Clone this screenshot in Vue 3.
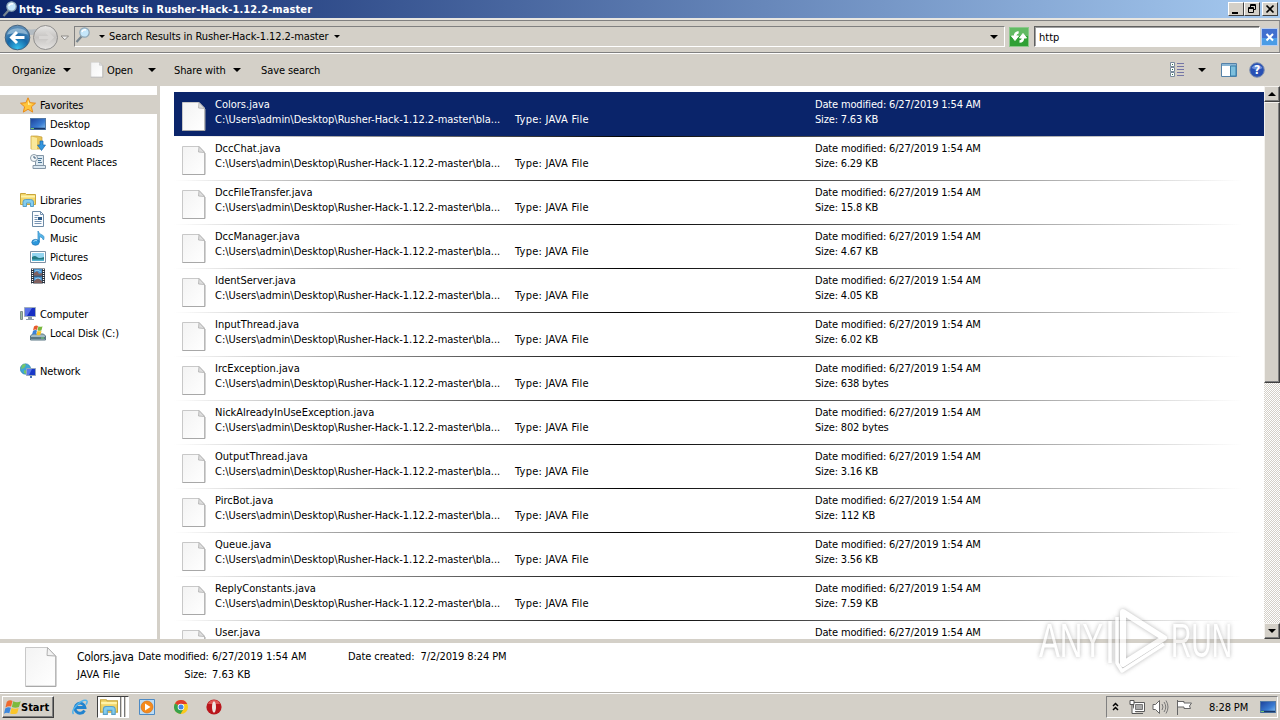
<template>
  <div class="screen">
    <svg class="sprite" width="0" height="0">
      <defs>
        <linearGradient id="paper" x1="0" y1="0" x2="1" y2="1">
          <stop offset="0" stop-color="#f3f3f3" />
          <stop offset="1" stop-color="#fff" />
        </linearGradient>
        <linearGradient id="blueScreen" x1="0" y1="0" x2="1" y2="1">
          <stop offset="0" stop-color="#1c4099" />
          <stop offset="0.6" stop-color="#3a7cd2" />
          <stop offset="1" stop-color="#8cc4f0" />
        </linearGradient>
        <radialGradient id="backBall" cx="0.5" cy="0.95" r="0.9">
          <stop offset="0" stop-color="#35c0ee" />
          <stop offset="0.5" stop-color="#1668a8" />
          <stop offset="1" stop-color="#5f8fb8" />
        </radialGradient>
        <linearGradient id="greyBall" x1="0" y1="0" x2="0" y2="1">
          <stop offset="0" stop-color="#e8e7e5" />
          <stop offset="0.5" stop-color="#c6c4c2" />
          <stop offset="1" stop-color="#e6e4e2" />
        </linearGradient>
      </defs>
      <symbol id="i-file" viewBox="0 0 24 30">
        <path d="M.5 .5H17l5.500 5.500v22.500H.5z" fill="url(#paper)" stroke="#c8c8c8" />
        <path d="M17 .5l-.5 5.500 6 .5z" fill="#dedede" stroke="#b0b0b0" stroke-width=".8" />
        <path d="M.5 28.500h22.500V7" fill="none" stroke="#a8a8a8" />
      </symbol>
      <symbol id="i-search" viewBox="0 0 16 16">
        <path d="M6.500 9.500L1.500 15" stroke="#77858f" stroke-width="2.200" />
        <circle cx="9.500" cy="5.500" r="4.700" fill="#c5e6fa" stroke="#8da5b5" stroke-width="1.200" />
        <path d="M7 5a3 3 0 0 1 4-2" stroke="#fff" stroke-width="1.500" fill="none" />
      </symbol>
      <symbol id="i-star" viewBox="0 0 16 16">
        <path d="M8 .8l2.100 4.900 5.400.5-4.100 3.600 1.300 5.300L8 12.300l-4.700 2.800 1.300-5.300L.5 6.200l5.400-.5z" fill="#ffc53a" stroke="#e88a18" />
        <path d="M8 3l1.200 3.500 3 .4-4.200 1z" fill="#fff0a5" />
      </symbol>
      <symbol id="i-desktop" viewBox="0 0 16 16">
        <rect x=".5" y="2.500" width="15" height="11" fill="url(#blueScreen)" stroke="#5279a5" />
        <path d="M1 12.500h14" stroke="#173567" stroke-width="1.500" />
        <path d="M1 12.500h3" stroke="#74c66f" />
      </symbol>
      <symbol id="i-downloads" viewBox="0 0 16 16">
        <path d="M1 1h6l5 1v12H1z" fill="#e8c559" stroke="#c39b35" stroke-width=".7" />
        <path d="M1.500 1.500l5.500 1.500v12l-5.500-1z" fill="#fae99b" />
        <path d="M10 6h3v4h2.500l-4 5.500-4-5.500H10z" fill="#3396df" stroke="#1a68ad" stroke-width=".7" />
      </symbol>
      <symbol id="i-recent" viewBox="0 0 16 16">
        <path d="M5.500 1.500h8v10h-8zM3 11.500h12.500v3H3z" fill="#dce9f2" stroke="#8496a6" />
        <path d="M8 4.500h4M8 6.500h3M8 8.500h4" stroke="#4d7594" />
        <circle cx="4" cy="4" r="3.500" fill="#f4f8fa" stroke="#8b9ba8" />
        <path d="M4 2v2h2" stroke="#3e5d78" fill="none" />
      </symbol>
      <symbol id="i-libraries" viewBox="0 0 16 16">
        <path d="M.5 1.500h5l1 1h9v10H.5z" fill="#f2d66b" stroke="#c9a63c" />
        <path d="M1 4.500h14" stroke="#fff3a9" stroke-width="2" />
        <path d="M3 14.500V10q0-2.500 2.500-2.500h5Q13.500 7.500 13.500 10v4.500h-3V11h-4v3.500z" fill="#83cdef" stroke="#5a9fc6" />
      </symbol>
      <symbol id="i-documents" viewBox="0 0 16 16">
        <path d="M2.500.5h8l3 3v12h-11z" fill="#fbfdff" stroke="#6e8ba6" />
        <path d="M10.500.5v3h3M4.500 4.500h4M4.500 6.500h3M4.500 8.500h3M4.500 10.500h7M4.500 12.500h7" stroke="#7894b3" fill="none" />
        <rect x="8" y="6" width="4" height="3" fill="#2b5986" />
      </symbol>
      <symbol id="i-music" viewBox="0 0 16 16">
        <path d="M8 12V1q1 3 4 4t1.500 5q-1-3-4-3.500V12z" fill="#55b5e8" stroke="#3a92cc" stroke-width=".8" />
        <ellipse cx="5.500" cy="12.300" rx="3.700" ry="2.900" fill="#2d98dc" stroke="#2478b8" stroke-width=".8" />
        <path d="M3.500 11.500q1.500-1.500 3.500-.8" fill="none" stroke="#a9ddf8" />
      </symbol>
      <symbol id="i-pictures" viewBox="0 0 16 16">
        <path d="M.5 2.500h15v11H.5z" fill="#fff" stroke="#7d91a5" />
        <path d="M2 4h12v8H2z" fill="#94d5f0" />
        <path d="M2 8q3-2 5 0t7 0v4H2z" fill="#247b83" />
        <path d="M2 10.500h12V12H2z" fill="#57b6d3" />
      </symbol>
      <symbol id="i-videos" viewBox="0 0 16 16">
        <path d="M1 .5h14v15H1z" fill="#28323e" />
        <path d="M4 1h8v6.500H4zM4 8.500h8V15H4z" fill="#4a91cc" />
        <path d="M4 5l3-2 2 3 3-1v2.500H4zM4 13l4-3 4 3v2H4z" fill="#80605f" />
        <path d="M5 3q3-2 6 1M5 11q3-2 6 0" fill="none" stroke="#8cc9ef" />
        <path d="M2.500 1v15M13.500 1v15" stroke="#fff" stroke-width="1.300" stroke-dasharray="1 1" />
      </symbol>
      <symbol id="i-computer" viewBox="0 0 16 16">
        <path d="M4.500 1.500h11v9h-11z" fill="#172fc4" stroke="#9faebd" />
        <path d="M5 2h7l-5 8H5z" fill="#5870e8" />
        <path d="M8 11h4v2h2v1H6v-1h2z" fill="#8c9caa" />
        <path d="M.5 5.500h2v8h-2z" fill="#9fbfa0" stroke="#7f8f8c" />
      </symbol>
      <symbol id="i-disk" viewBox="0 0 16 16">
        <path d="M2.500 9h11l2 2v4H.5v-4z" fill="#a2bac4" stroke="#5a7784" />
        <path d="M1 13h14" stroke="#5a7682" stroke-width="2" />
        <path d="M11 13h3" stroke="#75d576" />
        <path d="M4 1.500q2-1.500 4-.5L7 5q-2-1-4 .5z" fill="#e75b2c" />
        <path d="M8.500 1.300q2 1 4 0l-1 4q-2 1-4 0z" fill="#78b73c" />
        <path d="M3 6q2-1.500 4-.5L6 9.500q-2-1-4 .5z" fill="#3b82d7" />
        <path d="M7.500 5.800q2 1 4 0l-1 4q-2 1-4 0z" fill="#f6c325" />
      </symbol>
      <symbol id="i-network" viewBox="0 0 16 16">
        <circle cx="5.500" cy="6" r="5.200" fill="#3fa6d5" stroke="#2678a6" stroke-width=".6" />
        <path d="M2 2q3-2 4 0L4 5 1 6zM4 7l3 1-1 3-2-1z" fill="#74c56b" />
        <path d="M6.500 5.500h9v7h-9z" fill="#1939c9" stroke="#95a6bd" />
        <path d="M7 6h5l-3 6H7z" fill="#5878ed" />
        <path d="M10 13h2v2h-2z" fill="#4773b5" />
      </symbol>
      <symbol id="i-flag" viewBox="0 0 18 18">
        <path d="M3 3q3-2.500 6-1L7.500 8Q4.500 7 1.500 9z" fill="#ef6a2e" />
        <path d="M9.800 2.500q4 1.800 8 0l-2 6q-3.500 1.500-7.500 0z" fill="#7cba3d" />
        <path d="M1.300 10q3-2 6-.8L5.600 15q-3-1.300-5.600.5z" fill="#3d88dd" />
        <path d="M8 9.500q4 1.500 7.500 0L14 15q-3.800 1.700-7.500.3z" fill="#fbc62b" />
      </symbol>
    </svg>

    <header class="titlebar">
      <svg class="ic16"><use href="#i-search" /></svg>
      <span class="titlebar__text">http - Search Results in Rusher-Hack-1.12.2-master</span>
      <div class="titlebar__buttons">
        <span class="winbtn"><svg width="12" height="10"><path d="M2 9h6" stroke="#000" stroke-width="2" /></svg></span>
        <span class="winbtn"><svg width="12" height="10"><path d="M4.500 3V.5h5v5H8M4 1.500h6" fill="none" stroke="#000" /><path d="M2.500 3.500h5v5h-5zM2 4.500h6" fill="none" stroke="#000" /></svg></span>
        <span class="winbtn winbtn--close"><svg width="12" height="10"><path d="M2.500 1.500l7 7M9.500 1.500l-7 7" stroke="#000" stroke-width="1.700" /></svg></span>
      </div>
    </header>

    <nav class="navbar">
      <svg class="navbar__balls" width="70" height="30" viewBox="0 0 70 30">
        <path d="M20 5q11 5 22 0v6q-11 4-22 0z" fill="#b4bcc2" />
        <circle cx="17.500" cy="15.500" r="12.300" fill="url(#backBall)" stroke="#46647f" />
        <path d="M7 12.500a11 9 0 0 1 21 0q-10-3-21 0z" fill="#a6c7de" opacity=".7" />
        <path d="M11.500 15.500h13M17 10l-5.500 5.500 5.500 5.500" fill="none" stroke="#fff" stroke-width="3" />
        <circle cx="45.500" cy="15.500" r="12" fill="url(#greyBall)" stroke="#8f8e8d" />
        <path d="M39 15.500h12M46.500 10l5.500 5.500-5.500 5.500" fill="none" stroke="#d8d6d4" stroke-width="3" />
        <path d="M61 14h7.500l-3.700 3.800z" fill="#eee" stroke="#8d8a86" />
      </svg>
      <div class="address">
        <svg class="ic16"><use href="#i-search" /></svg>
        <i class="caret caret--small"></i>
        <span class="address__text">Search Results in Rusher-Hack-1.12.2-master</span>
        <i class="caret caret--small"></i>
        <i class="caret address__drop"></i>
      </div>
      <svg class="refresh" width="20" height="20" viewBox="0 0 20 20">
        <rect x=".5" y=".5" width="19" height="19" fill="#30a035" stroke="#8bc98b" />
        <path d="M1 1h18v8H1z" fill="#62ba63" />
        <path d="M9.500 5Q6 5 6 9.500M2.500 9h7L6 13.500z" fill="#fff" stroke="#fff" stroke-width="1" />
        <path d="M6 9.500Q6 5.500 9.500 5.500" fill="none" stroke="#fff" stroke-width="2.500" />
        <path d="M10.500 11h7L14 6.500z" fill="#fff" stroke="#fff" />
        <path d="M14 10.500Q14 14.500 10.500 14.500" fill="none" stroke="#fff" stroke-width="2.500" />
      </svg>
      <div class="searchbox">http</div>
      <svg class="clear" width="17" height="18" viewBox="0 0 17 18">
        <rect x=".5" y=".5" width="16" height="17" fill="#4270cf" stroke="#b9cdf0" />
        <path d="M1 10h15v7H1z" fill="#4a9ce6" />
        <path d="M5.500 6l6.500 6.500M12 6l-6.500 6.500" stroke="#fff" stroke-width="2" />
      </svg>
    </nav>

    <div class="toolbar">
      <span class="toolbar__item organize">Organize</span><i class="caret"></i>
      <svg class="toolbar__file"><use href="#i-file" /></svg>
      <span class="toolbar__item open">Open</span><i class="caret"></i>
      <span class="toolbar__item share">Share with</span><i class="caret"></i>
      <span class="toolbar__item save">Save search</span>
      <div class="toolbar__right">
        <svg width="15" height="16" viewBox="0 0 15 16">
          <path d="M.5 .5h4v4h-4zM.5 5.500h4v4h-4zM.5 10.500h4v4h-4z" fill="#fff" stroke="#788c9c" />
          <path d="M2 2.500h1M2 7.500h1M2 12.500h1" stroke="#26764e" />
          <path d="M7 1.500h7M7 4.500h7M7 7.500h7M7 10.500h7M7 13.500h7" stroke="#7476a6" />
        </svg>
        <i class="caret"></i>
        <svg class="preview" width="16" height="14" viewBox="0 0 16 14">
          <path d="M.5 .5h15v13H.5z" fill="#fff" stroke="#5481a8" />
          <path d="M1 2h14" stroke="#8ab6d5" stroke-width="2" />
          <path d="M9.500 3h5.500v10H9.500z" fill="#7dbfdd" stroke="#397fa9" />
        </svg>
        <svg width="16" height="16" viewBox="0 0 16 16">
          <circle cx="8" cy="8" r="7.300" fill="#2850b4" stroke="#8091b0" />
          <path d="M2.500 6a6 5 0 0 1 11 0q-5 3-11 0z" fill="#6f91dc" />
          <text x="8" y="12.300" text-anchor="middle" class="help">?</text>
        </svg>
      </div>
    </div>

    <main class="main">
      <aside class="sidebar">
        <div v-for="(group, g) in groups" :key="g" class="group">
          <div v-for="(item, i) in group" :key="item.name" class="side" :class="{ 'side--child': i > 0, 'side--active': item.active }">
            <svg class="ic16"><use :href="'#i-' + item.icon" /></svg>
            <span class="side__name">{{ item.name }}</span>
          </div>
        </div>
      </aside>
      <section class="results">
        <div v-for="(file, i) in files" :key="file.name" class="row" :class="{ 'row--selected': i === 0 }">
          <svg class="row__icon"><use href="#i-file" /></svg>
          <div class="row__name">
            <div class="row__title">{{ file.name }}</div>
            <div v-if="file.size" class="row__path">C:\Users\admin\Desktop\Rusher-Hack-1.12.2-master\bla...</div>
          </div>
          <div class="row__type"><span v-if="file.size">Type: JAVA File</span></div>
          <div class="row__info">
            <div>Date modified: 6/27/2019 1:54 AM</div>
            <div v-if="file.size">Size: {{ file.size }}</div>
          </div>
        </div>
      </section>
      <div class="scrollbar">
        <span class="scrollbar__btn"><i class="caret caret--up"></i></span>
        <span class="scrollbar__thumb"></span>
        <span class="scrollbar__btn scrollbar__btn--down"><i class="caret"></i></span>
      </div>
    </main>

    <footer class="details">
      <svg class="details__icon" viewBox="0 0 32 40">
        <path d="M.5 .5h22l8 8v30.500H.5z" fill="url(#paper)" stroke="#c8c8c8" />
        <path d="M22.500 .5l-.5 8 8.500.5z" fill="#f2f2f2" stroke="#b0b0b0" />
        <path d="M.5 39.500h30.500V9" fill="none" stroke="#a8a8a8" />
      </svg>
      <div class="details__name">
        <div class="details__title">Colors.java</div>
        <div class="details__type">JAVA File</div>
      </div>
      <div class="details__labels">
        <div>Date modified:</div>
        <div>Size:</div>
      </div>
      <div class="details__values">
        <div>6/27/2019 1:54 AM</div>
        <div>7.63 KB</div>
      </div>
      <div class="details__created">Date created:&nbsp; 7/2/2019 8:24 PM</div>
    </footer>

    <div class="taskbar">
      <div class="start">
        <svg width="17" height="17" viewBox="0 0 18 18"><use href="#i-flag" width="18" height="18" /></svg>
        <b>Start</b>
      </div>
      <svg class="ie" width="16" height="16" viewBox="0 0 16 16">
        <path d="M12.500 11.500A5 5 0 1 1 13 8.500H4.500" fill="none" stroke="#2183cf" stroke-width="2.800" />
        <path d="M1.500 15Q-1 12 5 6t9.500-4.500q1.500 1-.5 4" fill="none" stroke="#51b3ec" stroke-width="1.500" />
      </svg>
      <div class="task">
        <span class="task__front"><svg width="18" height="18" viewBox="0 0 16 16"><use href="#i-libraries" width="16" height="16" /></svg></span>
        <span class="task__stack"></span>
        <span class="task__stack"></span>
      </div>
      <svg class="wmp" width="16" height="16" viewBox="0 0 16 16">
        <path d="M.5 .5h15v15H.5z" fill="#bcdcf5" stroke="#4d8ac4" />
        <circle cx="8" cy="8" r="6" fill="#f58a1c" stroke="#d26a0d" stroke-width=".6" />
        <path d="M6 4.500l5.500 3.500L6 11.500z" fill="#fff" />
      </svg>
      <svg class="chrome" width="14" height="14" viewBox="0 0 14 14">
        <circle cx="7" cy="7" r="7" fill="#fbc91b" />
        <path d="M7 7L1 3.400A7 7 0 0 1 13.200 4H7z" fill="#e03c2c" />
        <path d="M7 7L1 3.400A7 7 0 0 0 6.500 14l3-5z" fill="#38a24c" />
        <circle cx="7" cy="7" r="3.300" fill="#fff" />
        <circle cx="7" cy="7" r="2.500" fill="#4285e5" />
      </svg>
      <svg class="opera" width="16" height="16" viewBox="0 0 16 16">
        <circle cx="8" cy="8" r="7.600" fill="#b9161c" />
        <path d="M2 5a6.500 6.500 0 0 1 12 0z" fill="#de5653" />
        <ellipse cx="8" cy="8" rx="2" ry="5.800" fill="#eee6e2" />
      </svg>
      <div class="tray">
        <svg width="8" height="10" viewBox="0 0 8 10"><path d="M1 4l2.500-2.500L6 4M1 8l2.500-2.500L6 8" fill="none" stroke="#000" stroke-width="1.500" /></svg>
        <svg class="tray__net" width="16" height="16" viewBox="0 0 16 16">
          <path d="M4.500 3.500h11v9h-11zM7 14.500h7" fill="#fff" stroke="#5c5c5c" />
          <path d="M6.500 5.500h7v5h-7z" fill="#aaa" stroke="#777" />
          <path d="M1 1.500h4v4H1zM3 6v8.500h4" fill="#fff" stroke="#555" />
        </svg>
        <svg class="tray__vol" width="17" height="16" viewBox="0 0 17 16">
          <path d="M1 5.500h2.500L7.500 1.500v13l-4-4H1z" fill="#fff" stroke="#666" />
          <path d="M10 5q2 3 0 6M12 3q3.500 5 0 10M14 1.500q4 6.500 0 13" fill="none" stroke="#777" />
        </svg>
        <svg class="tray__flag" width="17" height="16" viewBox="0 0 17 16">
          <path d="M1.500 1v15M2 2.500h6v1.500h7.500l-2 3 1 2.500H8V8H2" fill="#fff" stroke="#666" />
        </svg>
        <span class="tray__time">8:28 PM</span>
        <svg class="ic16"><use href="#i-desktop" /></svg>
      </div>
    </div>

    <svg class="watermark" width="204" height="76" viewBox="0 0 204 76">
      <g class="watermark__text">
        <text x="4" y="54" textLength="64" lengthAdjust="spacingAndGlyphs">ANY</text>
        <text x="136" y="54" textLength="61" lengthAdjust="spacingAndGlyphs">RUN</text>
      </g>
      <g fill="none" stroke="#fff" stroke-linejoin="round">
        <path d="M88 9l41 26-41 26z" stroke-width="6" />
        <path d="M75 18v42M82 14v46l5 8 42-27" stroke-width="3.500" />
      </g>
    </svg>
  </div>
</template>

<script setup>
import { ref } from 'vue';

const groups = ref([
  [
    { name: 'Favorites', icon: 'star', active: true },
    { name: 'Desktop', icon: 'desktop' },
    { name: 'Downloads', icon: 'downloads' },
    { name: 'Recent Places', icon: 'recent' },
  ],
  [
    { name: 'Libraries', icon: 'libraries' },
    { name: 'Documents', icon: 'documents' },
    { name: 'Music', icon: 'music' },
    { name: 'Pictures', icon: 'pictures' },
    { name: 'Videos', icon: 'videos' },
  ],
  [
    { name: 'Computer', icon: 'computer' },
    { name: 'Local Disk (C:)', icon: 'disk' },
  ],
  [{ name: 'Network', icon: 'network' }],
]);

// the last row is cut by the pane, so only its first line is filled in
const files = ref([
  { name: 'Colors.java', size: '7.63 KB' },
  { name: 'DccChat.java', size: '6.29 KB' },
  { name: 'DccFileTransfer.java', size: '15.8 KB' },
  { name: 'DccManager.java', size: '4.67 KB' },
  { name: 'IdentServer.java', size: '4.05 KB' },
  { name: 'InputThread.java', size: '6.02 KB' },
  { name: 'IrcException.java', size: '638 bytes' },
  { name: 'NickAlreadyInUseException.java', size: '802 bytes' },
  { name: 'OutputThread.java', size: '3.16 KB' },
  { name: 'PircBot.java', size: '112 KB' },
  { name: 'Queue.java', size: '3.56 KB' },
  { name: 'ReplyConstants.java', size: '7.59 KB' },
  { name: 'User.java', size: '' },
]);
</script>

<style>
body {
  margin: 0;
  overflow: hidden;
}
</style>

<style scoped>
.screen {
  position: relative;
  display: flex;
  flex-direction: column;
  width: 1280px;
  height: 720px;
  overflow: hidden;
  background: #d4d0c8;
  font-family: "DejaVu Sans Condensed", "DejaVu Sans", sans-serif;
  font-stretch: condensed;
  font-size: 11px;
  line-height: 15px;
  letter-spacing: -0.2px;
  color: #000;
  white-space: nowrap;
}

.screen * {
  box-sizing: border-box;
}

svg {
  display: block;
  flex: none;
}

.sprite {
  position: absolute;
}

.ic16 {
  width: 16px;
  height: 16px;
}

.caret {
  flex: none;
  width: 0;
  height: 0;
  border: 4px solid transparent;
  border-top-color: #000;
  border-bottom: 0;
}

.caret--small {
  border-width: 3px;
  border-bottom: 0;
}

.caret--up {
  border-top: 0;
  border-bottom: 4px solid #000;
}

.titlebar {
  display: flex;
  align-items: center;
  flex: none;
  height: 18px;
  padding: 0 2px 0 2px;
  background: linear-gradient(90deg, #0a246a, #a6caf0);
  color: #fff;
}

.titlebar__text {
  font-weight: bold;
  margin-left: 1px;
  letter-spacing: 0.1px;
}

.titlebar__buttons {
  display: flex;
  margin-left: auto;
}

.winbtn {
  width: 16px;
  height: 14px;
  padding: 1px;
  background: #d4d0c8;
  border: 1px solid;
  border-color: #fff #404040 #404040 #fff;
}

.winbtn--close {
  margin-left: 2px;
}

.navbar {
  display: flex;
  align-items: center;
  flex: none;
  height: 36px;
  border-top: 2px solid #e8e6e1;
  border-bottom: 1px solid #fff;
  box-shadow: inset 0 1px #808080, inset 0 -1px #808080, inset -1px 0 #909090;
}

.address {
  display: flex;
  align-items: center;
  width: 931px;
  height: 21px;
  margin-left: 4px;
  border: 1px solid;
  border-color: #808080 #fff #fff #808080;
}

.address .ic16 {
  margin: -3px 8px 0 0;
}

.address__text {
  margin: 0 5px 0 4px;
  letter-spacing: -0.09px;
}

.address__drop {
  margin-left: auto;
  margin-right: 6px;
}

.refresh {
  margin-left: 4px;
}

.searchbox {
  width: 226px;
  height: 21px;
  margin: 0 0 0 5px;
  padding: 3px 4px 1px;
  background: #fff;
  border: 1px solid;
  border-color: #606060 #fff #fff #606060;
  box-shadow: inset 1px 1px #a0a0a0;
  letter-spacing: 0;
}

.clear {
  margin-left: 1px;
}

.toolbar {
  display: flex;
  align-items: center;
  flex: none;
  height: 32px;
  padding: 0 15px 0 12px;
}

.toolbar__item {
  letter-spacing: -0.1px;
}

.organize {
  width: 51px;
}

.toolbar__file {
  width: 14px;
  height: 16px;
  margin: 0 3px 0 19px;
}

.open {
  width: 41px;
}

.share {
  width: 59px;
  margin-left: 18px;
}

.save {
  margin-left: 20px;
}

.toolbar__right {
  display: flex;
  align-items: center;
  margin-left: auto;
}

.toolbar__right .caret {
  margin: 0 15px 0 13px;
}

.preview {
  margin-right: 12px;
}

.help {
  fill: #fff;
  font-size: 12px;
  font-weight: bold;
}

.main {
  display: flex;
  flex: none;
  height: 553px;
  overflow: hidden;
  background: #fff;
}

.sidebar {
  width: 160px;
  padding-top: 9px;
  border-right: 3px solid #d4d0c8;
  flex: none;
}

.group {
  margin-bottom: 19px;
}

.side {
  display: flex;
  align-items: center;
  gap: 4px;
  height: 19px;
  padding-left: 20px;
}

.side--child {
  padding-left: 30px;
}

.side--active {
  background: #d4d0c8;
}

.side__name {
  padding-top: 1px;
  letter-spacing: -0.14px;
}

.results {
  flex: 1;
  height: 553px;
  padding: 6px 0 0 14px;
  overflow: hidden;
}

.row {
  display: flex;
  height: 44px;
  padding: 5px 0 0 8px;
  background: linear-gradient(90deg, #fff, #000 42%, #fff 98%) top / 100% 1px no-repeat;
}

.row--selected {
  background: #0a246a;
  color: #fff;
}

.row__icon {
  width: 24px;
  height: 30px;
  margin-top: 5px;
}

.row__name {
  width: 300px;
  margin-left: 9px;
}

.row__title {
  letter-spacing: 0;
}

.row__path {
  letter-spacing: -0.02px;
}

.row__type {
  width: 300px;
  padding-top: 15px;
  letter-spacing: 0.24px;
}

.row__info {
  letter-spacing: -0.17px;
}

.details {
  display: flex;
  flex: none;
  height: 54px;
  border-top: 4px solid #d4d0c8;
  border-bottom: 1px solid #b5b2ac;
  background: #fff;
  line-height: 18px;
  padding-top: 4px;
}

.details__icon {
  width: 32px;
  height: 40px;
  margin-left: 25px;
}

.details__name {
  width: 61px;
  margin-left: 20px;
  padding-top: 1px;
}

.details__title {
  font-size: 12px;
  letter-spacing: -0.3px;
}

.details__type {
  letter-spacing: 0.2px;
}

.details__labels {
  width: 69px;
  padding-top: 1px;
  text-align: right;
}

.details__values {
  width: 141px;
  padding: 1px 0 0 5px;
  letter-spacing: 0;
}

.details__created {
  padding-top: 1px;
  letter-spacing: -0.1px;
}

.taskbar {
  display: flex;
  align-items: center;
  flex: 1;
  padding-left: 2px;
  border-top: 1px solid #fff;
}

.start {
  display: flex;
  align-items: center;
  width: 52px;
  height: 22px;
  padding-left: 1px;
  border: 1px solid;
  border-color: #fff #404040 #404040 #fff;
  box-shadow: inset -1px -1px #808080;
}

.start b {
  font-size: 11px;
  letter-spacing: 0;
}

.ie {
  margin-left: 18px;
}

.task {
  display: flex;
  height: 22px;
  margin-left: 9px;
  border: 1px solid;
  border-color: #404040 #fff #fff #404040;
}

.task__front {
  width: 22px;
  padding: 1px 2px;
  background: #fff;
}

.task__stack {
  width: 4px;
  border-left: 1px solid #777;
  border-right: 2px solid #fff;
}

.wmp {
  margin-left: 10px;
}

.chrome {
  margin-left: 19px;
}

.opera {
  margin-left: 18px;
}

.tray {
  display: flex;
  align-items: center;
  width: 172px;
  height: 22px;
  margin: 0 2px 0 auto;
  padding-left: 5px;
  border: 1px solid;
  border-color: #808080 #fff #fff #808080;
}

.tray__net {
  margin-left: 9px;
}

.tray__vol {
  margin-left: 7px;
}

.tray__flag {
  margin-left: 7px;
}

.tray__time {
  width: 51px;
  margin-left: 16px;
  padding-top: 1px;
  letter-spacing: -0.1px;
}

.scrollbar {
  display: flex;
  flex-direction: column;
  width: 16px;
  background: repeating-conic-gradient(#d4d0c8 0 25%, #fff 0 50%) 0 0 / 2px 2px;
}

.scrollbar__btn,
.scrollbar__thumb {
  display: flex;
  align-items: center;
  justify-content: center;
  flex: none;
  height: 16px;
  background: #d4d0c8;
  border: 1px solid;
  border-color: #f4f2ee #404040 #404040 #f4f2ee;
  box-shadow: inset -1px -1px #808080;
}

.scrollbar__thumb {
  height: 281px;
}

.scrollbar__btn--down {
  margin-top: auto;
}

.watermark {
  position: absolute;
  left: 1035px;
  top: 603px;
  opacity: 0.72;
  filter: drop-shadow(0 0 2px #999);
}

.watermark__text {
  fill: #fff;
  font-family: "Liberation Sans", sans-serif;
  font-size: 48px;
}
</style>
